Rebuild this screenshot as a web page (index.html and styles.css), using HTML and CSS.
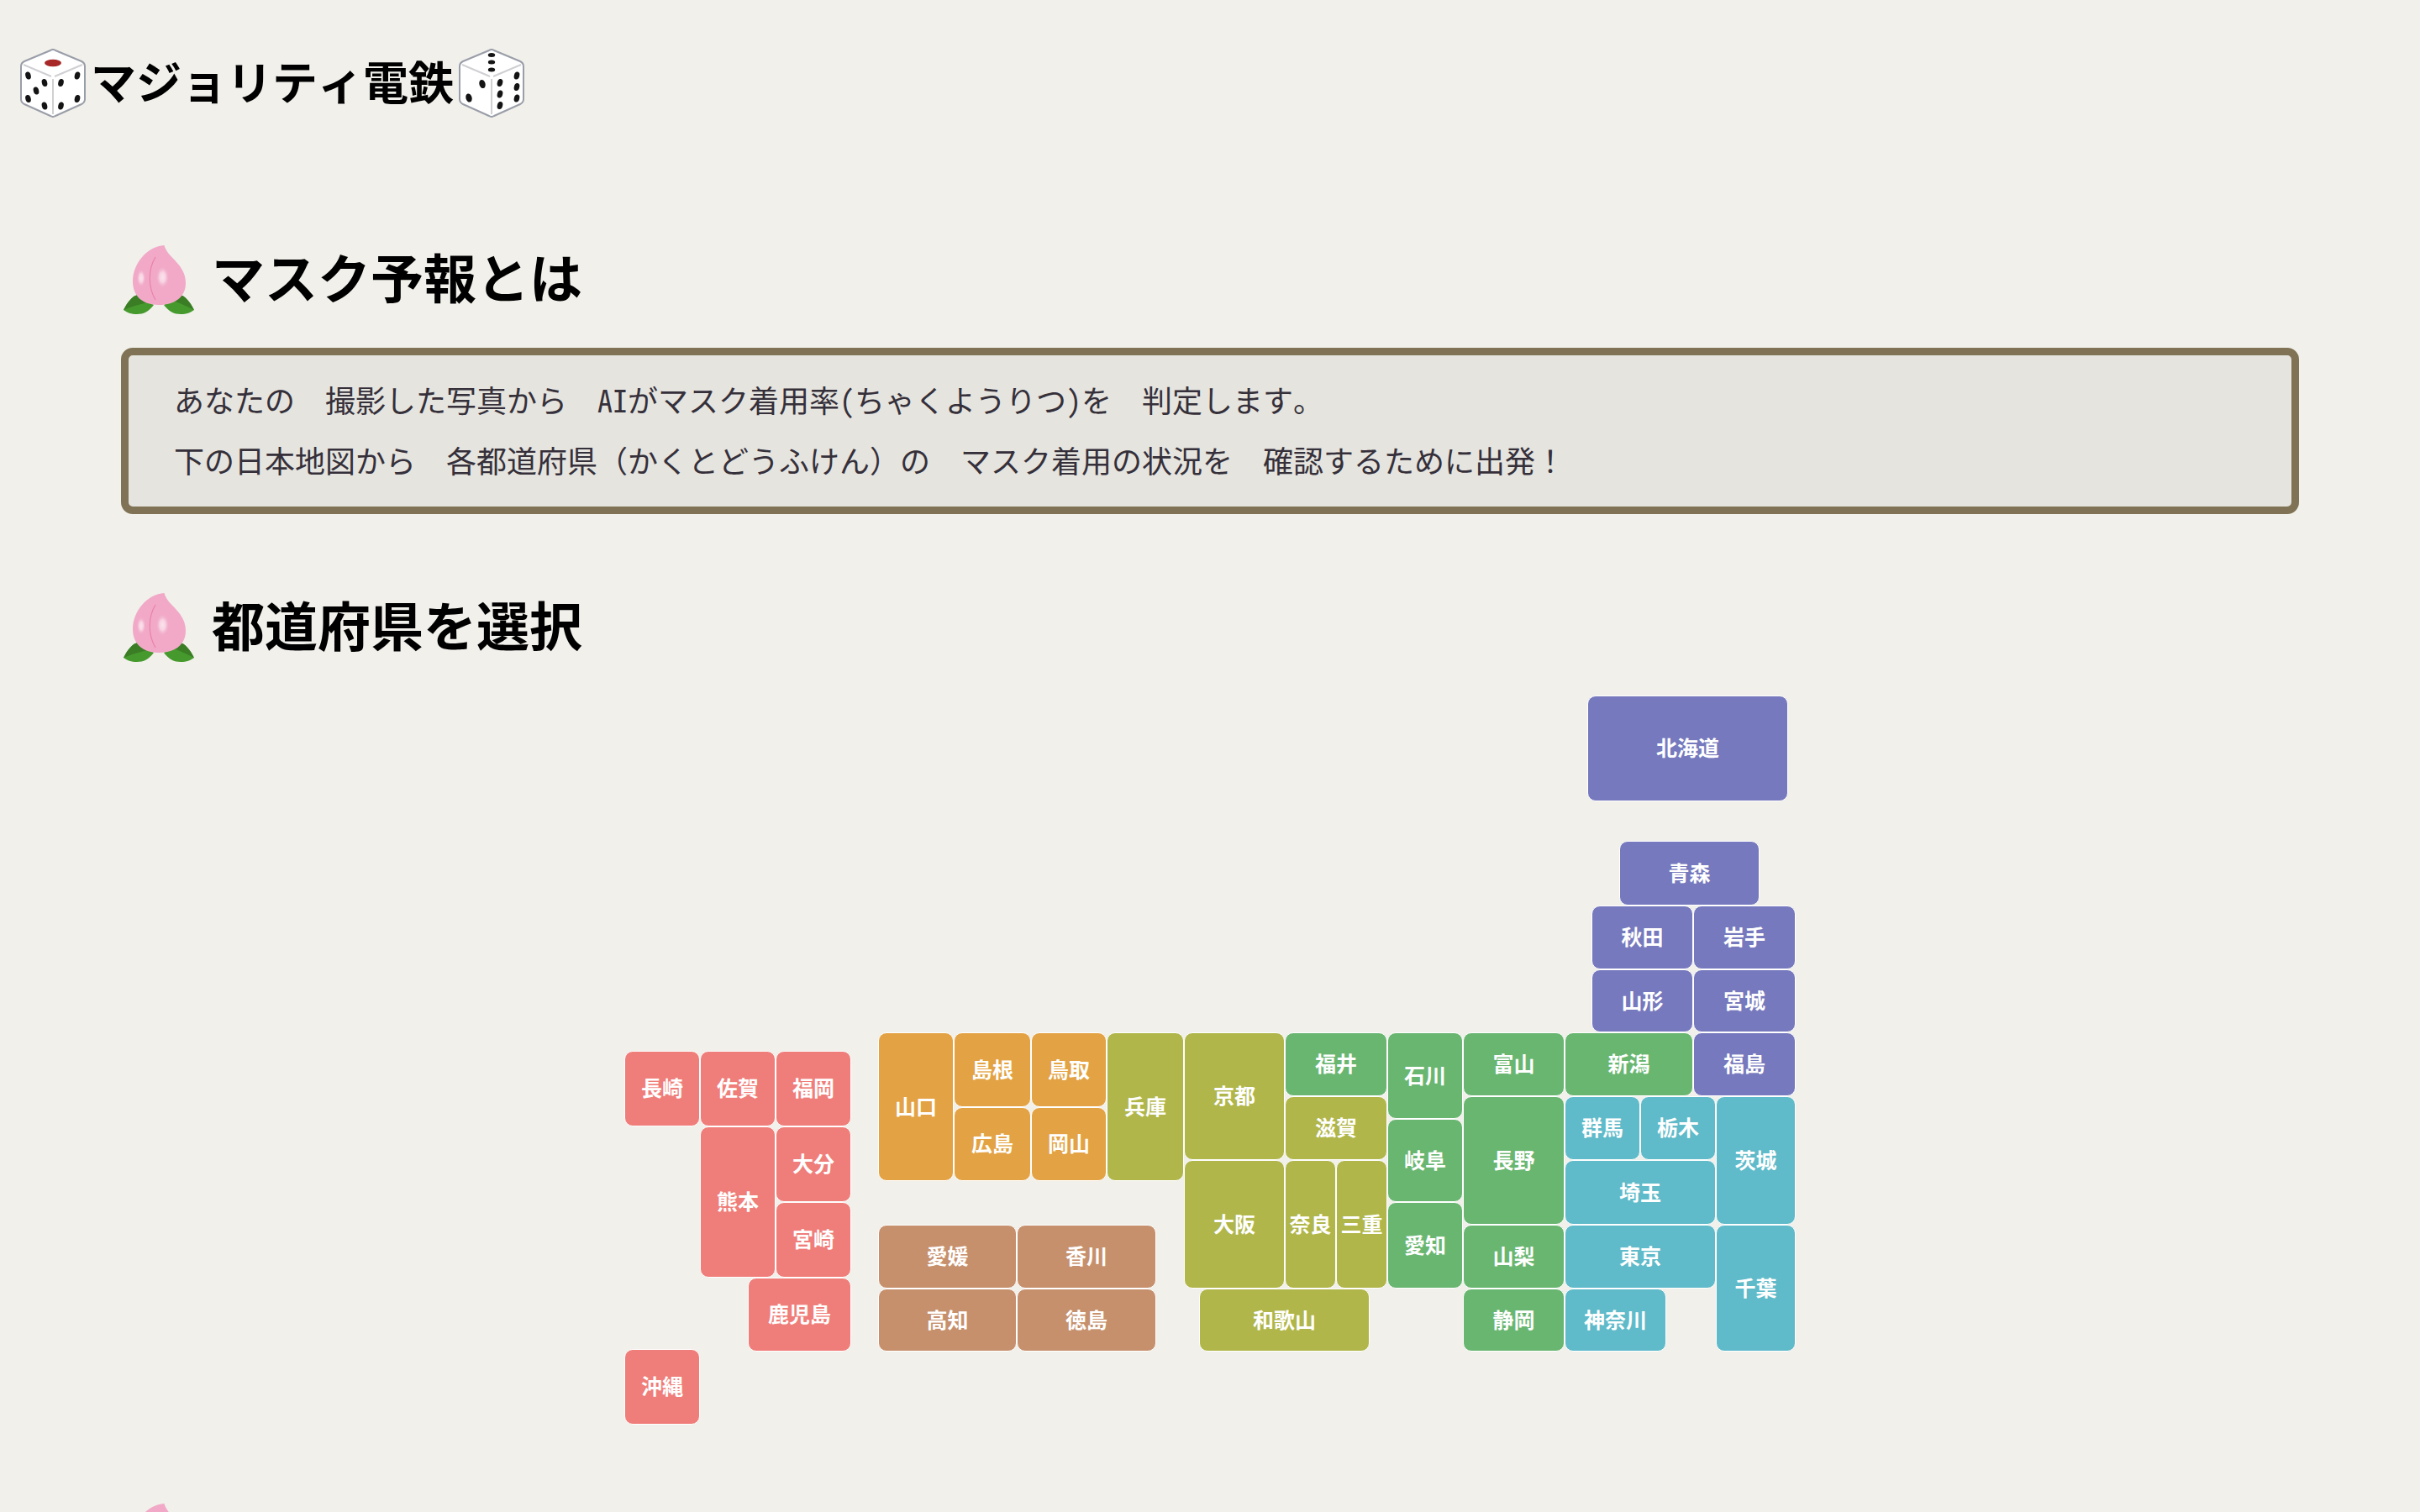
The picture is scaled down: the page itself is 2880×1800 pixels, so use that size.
FILE: index.html
```html
<!DOCTYPE html>
<html lang="ja">
<head>
<meta charset="utf-8">
<meta name="viewport" content="width=device-width, initial-scale=1">
<title>マジョリティ電鉄</title>
<link rel="stylesheet" href="styles.css">
</head>
<body>
<svg class="defs" aria-hidden="true">
  <defs>
    <radialGradient id="shine">
      <stop offset="0" stop-color="#fbe2ec"/>
      <stop offset="0.45" stop-color="#f8d3e2"/>
      <stop offset="1" stop-color="#f1a9c7" stop-opacity="0"/>
    </radialGradient>
    <symbol id="peach" viewBox="0 0 84 82">
      <path fill="#469a2d" d="M0 77C5 67 11 60 17 59L36 71C30 79 24 82 16 82C9 82 4 80 0 77Z"/>
      <path fill="#3a7d25" d="M0 77C5 67 11 60 17 59L29 68C20 70 9 73 0 77Z"/>
      <path fill="#469a2d" d="M84 77C79 67 73 60 67 59L48 71C54 79 60 82 68 82C75 82 80 80 84 77Z"/>
      <path fill="#3a7d25" d="M84 77C79 67 73 60 67 59L58 66C66 68 74 72 84 77Z"/>
      <path fill="#f1a9c7" d="M48.500 0C52 15 74 22 74 45C74 61 62 71 42 71C22 71 11 60 11 43C11 21 29 1 48.500 0Z"/>
      <path fill="none" stroke="#ea82aa" stroke-width="1.200" d="M38 14C29 29 29 49 38 65"/>
      <ellipse cx="21" cy="39" rx="5.500" ry="11" fill="url(#shine)"/>
      <ellipse cx="46.500" cy="38" rx="8" ry="13.500" fill="url(#shine)"/>
    </symbol>
  </defs>
</svg>

<header class="site-header">
  <svg class="die" viewBox="0 0 78 82" aria-hidden="true">
    <path class="die-body" d="M36 2Q39 0 42 2L73 15Q77 17 77 21V60Q77 64 73 66L42 80Q39 82 36 80L5 66Q1 64 1 60V21Q1 17 5 15Z"/>
    <path class="die-edge" d="M4 19L37 33M41 33L74 19M39 36V78"/>
    <ellipse cx="39" cy="17" rx="10" ry="4.200" fill="#a82828"/>
    <g class="pips">
      <ellipse cx="9.500" cy="32" rx="3.200" ry="4.600" transform="rotate(-15 9.500 32)"/>
      <ellipse cx="29" cy="40.500" rx="3.200" ry="4.600" transform="rotate(-15 29 40.500)"/>
      <ellipse cx="19" cy="50" rx="3.200" ry="4.600" transform="rotate(-15 19 50)"/>
      <ellipse cx="9.500" cy="59.500" rx="3.200" ry="4.600" transform="rotate(-15 9.500 59.500)"/>
      <ellipse cx="29" cy="68" rx="3.200" ry="4.600" transform="rotate(-15 29 68)"/>
      <ellipse cx="48.500" cy="40.500" rx="3.200" ry="4.600" transform="rotate(15 48.500 40.500)"/>
      <ellipse cx="68" cy="32" rx="3.200" ry="4.600" transform="rotate(15 68 32)"/>
      <ellipse cx="48.500" cy="68" rx="3.200" ry="4.600" transform="rotate(15 48.500 68)"/>
      <ellipse cx="68" cy="59.500" rx="3.200" ry="4.600" transform="rotate(15 68 59.500)"/>
    </g>
  </svg>
  <h1 class="site-title">マジョリティ電鉄</h1>
  <svg class="die" viewBox="0 0 78 82" aria-hidden="true">
    <path class="die-body" d="M36 2Q39 0 42 2L73 15Q77 17 77 21V60Q77 64 73 66L42 80Q39 82 36 80L5 66Q1 64 1 60V21Q1 17 5 15Z"/>
    <path class="die-edge" d="M4 19L37 33M41 33L74 19M39 36V78"/>
    <g class="pips">
      <ellipse cx="39" cy="7.500" rx="4.200" ry="2.500"/>
      <ellipse cx="39" cy="16" rx="4.200" ry="2.500"/>
      <ellipse cx="39" cy="25" rx="4.200" ry="2.500"/>
      <ellipse cx="28" cy="42" rx="3.600" ry="5.200" transform="rotate(-15 28 42)"/>
      <ellipse cx="12" cy="58.500" rx="3.600" ry="5.200" transform="rotate(-15 12 58.500)"/>
      <ellipse cx="49" cy="40.500" rx="3.200" ry="4.600" transform="rotate(15 49 40.500)"/>
      <ellipse cx="49" cy="54" rx="3.200" ry="4.600" transform="rotate(15 49 54)"/>
      <ellipse cx="49" cy="67.500" rx="3.200" ry="4.600" transform="rotate(15 49 67.500)"/>
      <ellipse cx="69" cy="32" rx="3.200" ry="4.600" transform="rotate(15 69 32)"/>
      <ellipse cx="69" cy="45.500" rx="3.200" ry="4.600" transform="rotate(15 69 45.500)"/>
      <ellipse cx="69" cy="59" rx="3.200" ry="4.600" transform="rotate(15 69 59)"/>
    </g>
  </svg>
</header>

<main class="content">
  <section class="about">
    <h2 class="heading"><svg class="peach" aria-hidden="true"><use href="#peach"/></svg><span class="heading-text">マスク予報とは</span></h2>
    <div class="message">
      <p>あなたの　撮影した写真から　AIがマスク着用率(ちゃくようりつ)を　判定します。</p>
      <p>下の日本地図から　各都道府県（かくとどうふけん）の　マスク着用の状況を　確認するために出発！</p>
    </div>
  </section>

  <section class="select">
    <h2 class="heading"><svg class="peach" aria-hidden="true"><use href="#peach"/></svg><span class="heading-text">都道府県を選択</span></h2>
    <nav class="map" aria-label="都道府県">
      <a href="#hokkaido" class="pref north hokkaido">北海道</a>
      <a href="#aomori" class="pref north aomori">青森</a>
      <a href="#akita" class="pref north akita">秋田</a>
      <a href="#iwate" class="pref north iwate">岩手</a>
      <a href="#yamagata" class="pref north yamagata">山形</a>
      <a href="#miyagi" class="pref north miyagi">宮城</a>
      <a href="#fukushima" class="pref north fukushima">福島</a>
      <a href="#ibaraki" class="pref kanto ibaraki">茨城</a>
      <a href="#tochigi" class="pref kanto tochigi">栃木</a>
      <a href="#gunma" class="pref kanto gunma">群馬</a>
      <a href="#saitama" class="pref kanto saitama">埼玉</a>
      <a href="#chiba" class="pref kanto chiba">千葉</a>
      <a href="#tokyo" class="pref kanto tokyo">東京</a>
      <a href="#kanagawa" class="pref kanto kanagawa">神奈川</a>
      <a href="#niigata" class="pref chubu niigata">新潟</a>
      <a href="#toyama" class="pref chubu toyama">富山</a>
      <a href="#ishikawa" class="pref chubu ishikawa">石川</a>
      <a href="#fukui" class="pref chubu fukui">福井</a>
      <a href="#yamanashi" class="pref chubu yamanashi">山梨</a>
      <a href="#nagano" class="pref chubu nagano">長野</a>
      <a href="#gifu" class="pref chubu gifu">岐阜</a>
      <a href="#shizuoka" class="pref chubu shizuoka">静岡</a>
      <a href="#aichi" class="pref chubu aichi">愛知</a>
      <a href="#mie" class="pref kinki mie">三重</a>
      <a href="#shiga" class="pref kinki shiga">滋賀</a>
      <a href="#kyoto" class="pref kinki kyoto">京都</a>
      <a href="#osaka" class="pref kinki osaka">大阪</a>
      <a href="#hyogo" class="pref kinki hyogo">兵庫</a>
      <a href="#nara" class="pref kinki nara">奈良</a>
      <a href="#wakayama" class="pref kinki wakayama">和歌山</a>
      <a href="#tottori" class="pref chugoku tottori">鳥取</a>
      <a href="#shimane" class="pref chugoku shimane">島根</a>
      <a href="#okayama" class="pref chugoku okayama">岡山</a>
      <a href="#hiroshima" class="pref chugoku hiroshima">広島</a>
      <a href="#yamaguchi" class="pref chugoku yamaguchi">山口</a>
      <a href="#tokushima" class="pref shikoku tokushima">徳島</a>
      <a href="#kagawa" class="pref shikoku kagawa">香川</a>
      <a href="#ehime" class="pref shikoku ehime">愛媛</a>
      <a href="#kochi" class="pref shikoku kochi">高知</a>
      <a href="#fukuoka" class="pref kyushu fukuoka">福岡</a>
      <a href="#saga" class="pref kyushu saga">佐賀</a>
      <a href="#nagasaki" class="pref kyushu nagasaki">長崎</a>
      <a href="#kumamoto" class="pref kyushu kumamoto">熊本</a>
      <a href="#oita" class="pref kyushu oita">大分</a>
      <a href="#miyazaki" class="pref kyushu miyazaki">宮崎</a>
      <a href="#kagoshima" class="pref kyushu kagoshima">鹿児島</a>
      <a href="#okinawa" class="pref kyushu okinawa">沖縄</a>
    </nav>
  </section>

  <section class="more">
    <div class="heading"><svg class="peach" aria-hidden="true"><use href="#peach"/></svg></div>
  </section>
</main>
</body>
</html>
```
FILE: styles.css
```css
* {
  box-sizing: border-box;
}

html {
  overflow: hidden;
}

body {
  margin: 0;
  background: #f1f0eb;
  color: #000;
  font-family: "Noto Sans Mono CJK JP", "Noto Sans CJK JP", sans-serif;
}

.defs {
  display: block;
  width: 0;
  height: 0;
}

.site-header {
  display: flex;
  align-items: center;
  gap: 6px;
  height: 198px;
  padding-left: 24px;
}

.die {
  width: 78px;
  height: 82px;
  flex: none;
}

.die-body {
  fill: #fff;
  stroke: #9a9ea8;
  stroke-width: 2;
}

.die-edge {
  fill: none;
  stroke: #d0d0d4;
  stroke-width: 2;
}

.pips {
  fill: #141414;
}

.site-title {
  margin: 0;
  padding-bottom: 6px;
  font-size: 54px;
  font-weight: 700;
  line-height: 80px;
}

.content {
  padding: 76px 144px 0;
}

.heading {
  display: flex;
  align-items: center;
  gap: 21px;
  height: 118px;
  margin: 0;
  padding-left: 3px;
  font-size: 63px;
  font-weight: 700;
  line-height: 90px;
}

.heading-text {
  padding-bottom: 10px;
}

.peach {
  width: 84px;
  height: 82px;
  flex: none;
}

.message {
  margin-top: 22px;
  padding: 16px 54px 20px;
  border: 9px solid #807254;
  border-radius: 14px;
  background: #e5e4df;
  color: #35303a;
  font-size: 36px;
  line-height: 72px;
}

.message p {
  margin: 0;
}

.select {
  padding-top: 76px;
}

.map {
  display: grid;
  grid-template-columns:
    90fr 57fr 33fr 90fr 32fr 90fr 75fr 17fr 90fr 59fr 33fr 18fr 102fr 61fr
    40fr 21fr 90fr 121fr 27fr 5fr 33fr 25fr 31fr 32fr 27fr 52fr 34fr 9fr;
  grid-template-rows:
    126px 47px 77px 76px 75px 22px 54px 13px 14px 9px
    40px 25px 25px 27px 63px 13px 72px 3px 87px;
  max-width: 1394px;
  margin: 22px auto 0;
}

.pref {
  display: flex;
  align-items: center;
  justify-content: center;
  min-width: 0;
  padding-bottom: 4px;
  border: 1px solid #fff;
  border-radius: 10px;
  color: #fff;
  font-size: 25px;
  font-weight: 700;
  line-height: 36px;
  text-decoration: none;
  white-space: nowrap;
}

.north { background: #7679bd; }
.kanto { background: #5fbac9; }
.chubu { background: #69b671; }
.kinki { background: #b0b649; }
.chugoku { background: #e3a243; }
.shikoku { background: #c6906d; }
.kyushu { background: #ef7d79; }

/* row start / column start / row end / column end */
.hokkaido { grid-area: 1 / 20 / 2 / 28; }
.aomori { grid-area: 3 / 22 / 4 / 27; }
.akita { grid-area: 4 / 21 / 5 / 25; }
.iwate { grid-area: 4 / 25 / 5 / 29; }
.yamagata { grid-area: 5 / 21 / 6 / 25; }
.miyagi { grid-area: 5 / 25 / 6 / 29; }
.fukushima { grid-area: 6 / 25 / 8 / 29; }
.ibaraki { grid-area: 8 / 26 / 15 / 29; }
.tochigi { grid-area: 8 / 23 / 12 / 26; }
.gunma { grid-area: 8 / 19 / 12 / 23; }
.saitama { grid-area: 12 / 19 / 15 / 26; }
.chiba { grid-area: 15 / 26 / 19 / 29; }
.tokyo { grid-area: 15 / 19 / 17 / 26; }
.kanagawa { grid-area: 17 / 19 / 19 / 24; }
.niigata { grid-area: 6 / 19 / 8 / 25; }
.toyama { grid-area: 6 / 18 / 8 / 19; }
.ishikawa { grid-area: 6 / 17 / 10 / 18; }
.fukui { grid-area: 6 / 14 / 8 / 17; }
.yamanashi { grid-area: 15 / 18 / 17 / 19; }
.nagano { grid-area: 8 / 18 / 15 / 19; }
.gifu { grid-area: 10 / 17 / 14 / 18; }
.shizuoka { grid-area: 17 / 18 / 19 / 19; }
.aichi { grid-area: 14 / 17 / 17 / 18; }
.mie { grid-area: 12 / 15 / 17 / 17; }
.shiga { grid-area: 8 / 14 / 12 / 17; }
.kyoto { grid-area: 6 / 12 / 12 / 14; }
.osaka { grid-area: 12 / 12 / 17 / 14; }
.hyogo { grid-area: 6 / 10 / 13 / 12; }
.nara { grid-area: 12 / 14 / 17 / 15; }
.wakayama { grid-area: 17 / 13 / 19 / 16; }
.tottori { grid-area: 6 / 9 / 9 / 10; }
.shimane { grid-area: 6 / 7 / 9 / 9; }
.okayama { grid-area: 9 / 9 / 13 / 10; }
.hiroshima { grid-area: 9 / 7 / 13 / 9; }
.yamaguchi { grid-area: 6 / 6 / 13 / 7; }
.tokushima { grid-area: 17 / 8 / 19 / 11; }
.kagawa { grid-area: 15 / 8 / 17 / 11; }
.ehime { grid-area: 15 / 6 / 17 / 8; }
.kochi { grid-area: 17 / 6 / 19 / 8; }
.fukuoka { grid-area: 7 / 4 / 11 / 5; }
.saga { grid-area: 7 / 2 / 11 / 4; }
.nagasaki { grid-area: 7 / 1 / 11 / 2; }
.kumamoto { grid-area: 11 / 2 / 16 / 4; }
.oita { grid-area: 11 / 4 / 14 / 5; }
.miyazaki { grid-area: 14 / 4 / 16 / 5; }
.kagoshima { grid-area: 16 / 3 / 19 / 5; }
.okinawa { grid-area: 18 / 1 / 20 / 2; }

.more {
  padding-top: 76px;
}
```
